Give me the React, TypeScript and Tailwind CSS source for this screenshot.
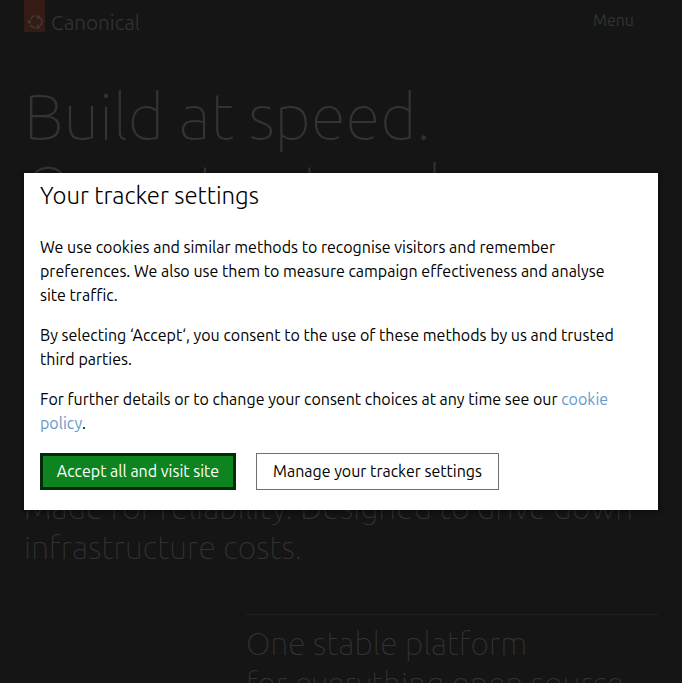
import type { ReactNode } from "react";

function Line({ className = "", children }: { className?: string; children: ReactNode }) {
  return <span className={`block whitespace-nowrap ${className}`}>{children}</span>;
}

function CanonicalMark() {
  return (
    <svg viewBox="0 0 21 32" className="h-8 w-[21px] shrink-0" aria-hidden="true">
      <rect width="21" height="32" fill="#351b14" />
      <g fill="none" stroke="#3a3735" strokeWidth="1.8">
        <path d="M6.4 18.7A6 6 0 0 1 11.2 15.9" />
        <path d="M16.4 18A6 6 0 0 1 16.4 25.8" />
        <path d="M6.4 25.1A6 6 0 0 0 11.2 27.9" />
      </g>
      <g fill="#3a3735">
        <circle cx="5.4" cy="21.8" r="2" />
        <circle cx="14.4" cy="16.9" r="2" />
        <circle cx="14" cy="27" r="2" />
      </g>
    </svg>
  );
}

export default function App() {
  return (
    <div className="relative h-[683px] w-[682px] overflow-hidden bg-[#151515] font-['Ubuntu','Noto_Sans',sans-serif] text-[#333]">
      <header className="flex h-12 items-start justify-between pr-12 pl-6">
        <div className="flex items-start">
          <CanonicalMark />
          <span className="pt-[9px] pl-1.5 text-[20.8px] leading-7 font-light">Canonical</span>
        </div>
        <span className="pt-2 text-base leading-6">Menu</span>
      </header>

      <main className="px-6">
        <h1 className="pt-8 text-[64px] leading-[72px] font-thin">
          <Line>Build at speed.</Line>
          <Line>Operate at scale.</Line>
        </h1>
        <p className="mt-[263px] text-[32px] leading-10 font-thin tracking-[0.14px]">
          <Line>Made for reliability. Designed to drive down</Line>
          <Line>infrastructure costs.</Line>
        </p>
        <section className="mt-[47px] ml-[222px] border-t border-[#202020] pt-2">
          <h2 className="text-[32px] leading-10 font-thin tracking-[0.14px]">
            <Line>One stable platform</Line>
            <Line>for everything open source</Line>
          </h2>
        </section>
      </main>

      <div className="absolute inset-0 px-6 pt-[173px]">
        <div
          role="dialog"
          className="h-[337px] bg-white px-4 pt-[7px] text-base leading-6 text-black shadow-[0_1px_5px_1px_rgba(0,0,0,0.45)]"
        >
          <h2 className="text-2xl leading-8 font-light tracking-[-0.03px]">
            <Line>Your tracker settings</Line>
          </h2>
          <p className="mt-[23px]">
            <Line>We use cookies and similar methods to recognise visitors and remember</Line>
            <Line>preferences. We also use them to measure campaign effectiveness and analyse</Line>
            <Line>site traffic.</Line>
          </p>
          <p className="mt-4">
            <Line>By selecting ‘Accept‘, you consent to the use of these methods by us and trusted</Line>
            <Line>third parties.</Line>
          </p>
          <p className="mt-4">
            <Line>
              For further details or to change your consent choices at any time see our{" "}
              <a className="text-[#69c]">cookie</a>
            </Line>
            <Line>
              <a className="text-[#69c]">policy</a>.
            </Line>
          </p>
          <div className="mt-[18px] flex gap-5">
            <button className="flex h-[37px] w-[196px] items-center justify-center border-[3px] border-[#032b09] bg-[#0e8420] pb-px text-white">
              <Line>Accept all and visit site</Line>
            </button>
            <button className="flex h-[37px] w-[243px] items-center justify-center border border-[#707070] bg-white pb-px">
              <Line>Manage your tracker settings</Line>
            </button>
          </div>
        </div>
      </div>
    </div>
  );
}
